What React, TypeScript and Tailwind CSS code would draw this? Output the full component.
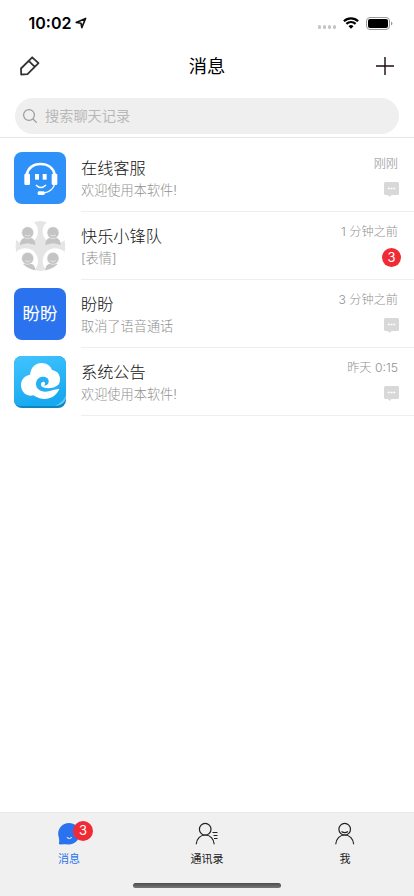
import { ReactNode, useState } from "react";

interface Chat {
  id: number;
  name: string;
  preview: string;
  time: string;
  unread: number;
  avatar: ReactNode;
}

const ServiceAvatar = () => (
  <svg viewBox="0 0 156 156" className="size-[52px] rounded-lg bg-[#2e91f9]" fill="none">
    <path d="M38 68C43 47 59 36 80 36s38 11 42 32" stroke="#fff" strokeWidth="8" />
    <path d="M122 95c-3 15-13 25-32 28" stroke="#fff" strokeWidth="4" />
    <g fill="#fff">
      <rect x="31" y="65" width="17" height="34" rx="4" />
      <rect x="113" y="65" width="17" height="34" rx="4" />
      <rect x="63" y="66" width="12" height="17" />
      <rect x="86" y="66" width="12" height="17" />
      <rect x="71" y="118" width="21" height="11" rx="4" />
    </g>
    <path d="M66 99q14 15 30 0" stroke="#fff" strokeWidth="5" />
  </svg>
);

const GroupAvatar = () => (
  <svg viewBox="12 15 156 156" className="size-[52px]">
    <clipPath id="disc">
      <circle cx="91" cy="93" r="75" />
    </clipPath>
    <g clipPath="url(#disc)">
      <circle cx="91" cy="93" r="75" fill="#e5e5e5" />
      {[
        [46, 49],
        [136, 49],
        [46, 138],
        [136, 138],
      ].map(([x, y]) => (
        <circle key={`${x}-${y}`} cx={x} cy={y} r="38" fill="#fff" />
      ))}
      {[
        [53, 53],
        [129, 53],
        [53, 130],
        [129, 130],
      ].map(([x, y]) => (
        <g key={`${x}-${y}`} transform={`translate(${x} ${y})`}>
          <path d="M-23 37C-23 20-13 14 0 14s23 6 23 23Q0 28-23 37Z" fill="#c4c4c4" />
          <circle r="18" fill="#c4c4c4" stroke="#fff" strokeWidth="1.5" />
          <path d="M-8 7q8 7 16 0" fill="none" stroke="#eee" strokeWidth="2.5" />
        </g>
      ))}
    </g>
  </svg>
);

const NoticeAvatar = () => (
  <svg viewBox="0 0 156 156" className="size-[52px] rounded-lg">
    <defs>
      <linearGradient id="sky" x1="0" y1="0" x2="0.3" y2="1">
        <stop offset="0" stopColor="#42c4ff" />
        <stop offset="1" stopColor="#18a9f0" />
      </linearGradient>
    </defs>
    <rect width="156" height="156" fill="#0d86c0" />
    <path d="M0 0H156V118Q152 146 122 150H20Q4 150 0 138Z" fill="url(#sky)" />
    <path d="M156 116Q150 138 122 150Q149 148 156 128Z" fill="#5fcbfb" />
    <path
      d="M136 99C126 123 101 134 77 127C68 124 64 122 59 118C38 124 21 108 21 88C21 70 32 59 48 56C51 33 65 21 82 21C99 21 111 31 114 42C130 44 139 57 138 70C138 82 133 90 124 95Z"
      fill="#fff"
    />
    <path
      d="M138 99C120 99 110 107 94 107C76 106 66 97 66 84C66 70 76 62 87 62C99 62 105 69 104 78C103 86 96 90 90 88C95 84 94 76 87 77C79 79 79 90 87 94C98 99 122 97 133 86Z"
      fill="#25b0f5"
    />
  </svg>
);

const chats: Chat[] = [
  { id: 1, name: "在线客服", preview: "欢迎使用本软件!", time: "刚刚", unread: 0, avatar: <ServiceAvatar /> },
  { id: 2, name: "快乐小锋队", preview: "[表情]", time: "1 分钟之前", unread: 3, avatar: <GroupAvatar /> },
  {
    id: 3,
    name: "盼盼",
    preview: "取消了语音通话",
    time: "3 分钟之前",
    unread: 0,
    avatar: (
      <div className="flex size-[52px] items-center justify-center rounded-lg bg-[#2b73ee] pt-px text-[17.5px] text-white">
        盼盼
      </div>
    ),
  },
  { id: 4, name: "系统公告", preview: "欢迎使用本软件!", time: "昨天 0:15", unread: 0, avatar: <NoticeAvatar /> },
];

const StatusBar = () => (
  <div className="flex h-11 shrink-0 items-center pt-0.5 pr-[21px] pl-[28.5px]">
    <span className="text-[16px] font-semibold text-black">10:02</span>
    <svg viewBox="0 0 12 12" className="ml-1 size-3" fill="none" stroke="#111" strokeWidth="1.6" strokeLinejoin="round">
      <path d="M1.2 5.4 10.6 1.4 6.8 10.6 6 6.2Z" />
    </svg>
    <div className="mt-2 ml-auto flex gap-[1.5px]">
      {[1, 2, 3, 4].map((n) => (
        <span key={n} className="size-[3.5px] rounded-full bg-[#c4c4c4]" />
      ))}
    </div>
    <svg viewBox="0 0 16 12" className="ml-[7px] h-3 w-4" fill="none" stroke="#000" strokeWidth="2.2">
      <path d="M.9 4.2a10.1 10.1 0 0 1 14.2 0M3.4 6.9a6.5 6.5 0 0 1 9.2 0" />
      <path d="M5.5 9.2a3.6 3.6 0 0 1 5 0L8 11.8Z" fill="#000" stroke="none" />
    </svg>
    <svg viewBox="0 0 27 13" className="ml-[7px] h-[13px] w-[27px]">
      <rect x=".5" y=".5" width="23" height="12" rx="3.5" fill="none" stroke="#999" />
      <rect x="2" y="2" width="20" height="9" rx="2" />
      <path d="M25 4.5q1.4.5 1.4 2T25 8.5Z" fill="#999" />
    </svg>
  </div>
);

const MessageIcon = () => (
  <svg viewBox="0 0 15 15" className="size-[15px]">
    <path d="M1.5 0h12Q15 0 15 1.5v10Q15 13 13.5 13H7.5L5.5 15 4 13H1.5Q0 13 0 11.5v-10Q0 0 1.5 0Z" fill="#d8d8d8" />
    <path d="M3.7 6.5h2M6.5 6.5h2M9.3 6.5h2" stroke="#fff" strokeWidth="1.5" />
  </svg>
);

const ChatRow = ({ chat }: { chat: Chat }) => (
  <li className="flex h-[68px] pl-[14px]">
    <div className="pt-2">{chat.avatar}</div>
    <div className="ml-[15px] flex flex-1 justify-between border-b border-[#eee] pr-4">
      <div className="pt-[13px]">
        <h2 className="text-[16.2px] leading-[23px] font-light text-[#111]">{chat.name}</h2>
        <p className="text-[13.2px] leading-5 font-light text-[#909090]">{chat.preview}</p>
      </div>
      <div className="flex flex-col items-end pt-[11px]">
        <span className="text-[12.2px] leading-[18px] font-light text-[#909090]">{chat.time}</span>
        {chat.unread > 0 ? (
          <span className="mt-[7px] -mr-[3px] flex size-[19px] items-center justify-center rounded-full bg-[#f02b36] text-[13px] text-white">
            {chat.unread}
          </span>
        ) : (
          <span className="mt-[9px] -mr-px">
            <MessageIcon />
          </span>
        )}
      </div>
    </div>
  </li>
);

const tabs = [
  {
    id: "messages",
    label: "消息",
    icon: (
      <svg viewBox="0 0 24 24" className="size-6">
        <path d="M3 22.4Q1.6 22.2 2 20.5 2.6 18.5 1.7 15A10.8 10.8 0 1 1 12.5 22.5Q8 21.9 3 22.4Z" fill="#2b73ee" />
        <path d="M9.8 15.5q2.5 2.2 5 0" fill="none" stroke="#fff" strokeWidth="1" />
      </svg>
    ),
  },
  {
    id: "contacts",
    label: "通讯录",
    icon: (
      <svg viewBox="0 0 24 24" className="size-6" fill="none" stroke="#222" strokeWidth="1.2">
        <circle cx="10.2" cy="7.2" r="5.8" />
        <path d="M1.2 22.3c.4-5.5 4-9.3 9-9.3s8.600 3.800 9 9.300M17.500 10.500h5M18.500 13.500h4M19 16.500h3.500" />
      </svg>
    ),
  },
  {
    id: "me",
    label: "我",
    icon: (
      <svg viewBox="0 0 24 24" className="size-6" fill="none" stroke="#222" strokeWidth="1.2">
        <circle cx="11.700" cy="7.200" r="5.800" />
        <path d="M2.700 22.300c.4-5.500 4-9.300 9-9.300s8.600 3.800 9 9.300M8.500 9.500q3.200 2.400 6.400 0" />
      </svg>
    ),
  },
];

const App = () => {
  const [active, setActive] = useState<string>("messages");

  return (
    <div className="flex h-[896px] w-[414px] flex-col overflow-hidden bg-white font-[Inter,'Noto_Sans_CJK_SC',sans-serif]">
      <StatusBar />

      <header className="flex h-11 shrink-0 items-center justify-between pr-5 pl-5">
        <svg viewBox="0 0 20 20" className="size-5" fill="none" stroke="#333" strokeWidth="1.8" strokeLinejoin="round">
          <path d="M12.2 1.3 18.5 7.2 7.500 18.100 1.200 18.500 1 12.500ZM8.700 4.800 14.800 10.800" />
        </svg>
        <h1 className="pt-0.5 pr-0.5 text-[18.3px] text-black">消息</h1>
        <svg viewBox="0 0 18 18" className="size-[18px]" stroke="#1c0c0c" strokeWidth="1.4">
          <path d="M9 0v18M0 9h18" />
        </svg>
      </header>

      <div className="shrink-0 border-b border-[#e7e7e7] px-[15px] pt-[10px] pb-[3px]">
        <label className="flex h-9 items-center rounded-full bg-[#efefef] pl-2">
          <svg viewBox="0 0 14 14" className="size-[14px]" fill="none" stroke="#999" strokeWidth="1.2">
            <circle cx="6" cy="6" r="5.4" />
            <path d="m10 10 3.7 3.7" />
          </svg>
          <input
            className="ml-2 w-60 text-[14.2px] outline-none placeholder:text-[#b8b8b8]"
            placeholder="搜索聊天记录"
          />
        </label>
      </div>

      <ul className="flex-1 pt-[6px]">
        {chats.map((chat) => (
          <ChatRow key={chat.id} chat={chat} />
        ))}
      </ul>

      <nav className="flex h-[84px] shrink-0 flex-col border-t border-[#e8e8e8] bg-[#f0f0f0]">
        <div className="grid grid-cols-3">
          {tabs.map((tab) => (
            <button key={tab.id} onClick={() => setActive(tab.id)} className="flex flex-col items-center pt-[9px]">
              <span className="relative">
                {tab.icon}
                {tab.id === "messages" && (
                  <span className="absolute -top-[1px] left-4 flex size-5 items-center justify-center rounded-full bg-[#f02b36] text-[13px] text-white">
                    3
                  </span>
                )}
              </span>
              <span className={`mt-[5px] text-[11px] leading-4 ${active === tab.id ? "text-[#2b73ee]" : "text-[#222]"}`}>
                {tab.label}
              </span>
            </button>
          ))}
        </div>
        <div className="mx-auto mt-auto mb-2 h-[5px] w-[148px] rounded-full bg-gradient-to-b from-[#4d4d4d] to-[#777]" />
      </nav>
    </div>
  );
};

export default App;
